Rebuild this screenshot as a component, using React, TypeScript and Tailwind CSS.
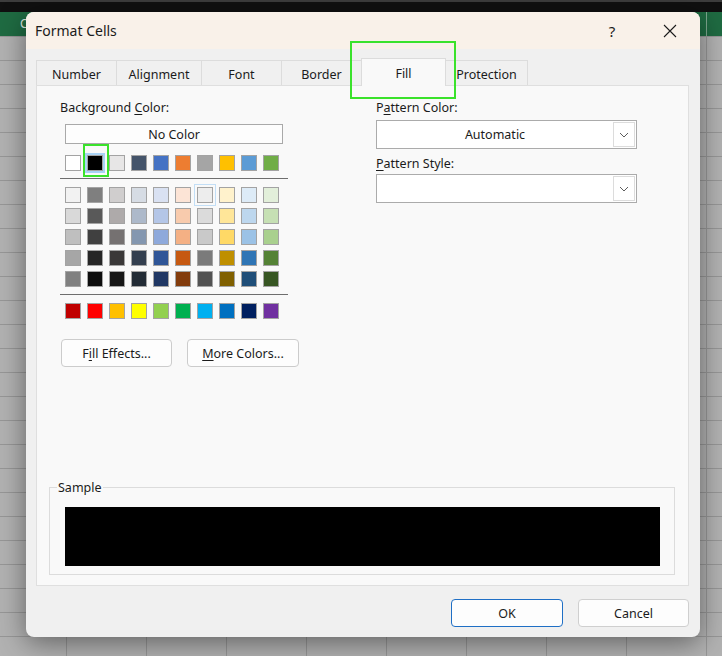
import React from "react";

const themeRow = [
  "bg-[#ffffff]", "bg-[#000000]", "bg-[#e7e6e6]", "bg-[#44546a]", "bg-[#4472c4]",
  "bg-[#ed7d31]", "bg-[#a5a5a5]", "bg-[#ffc000]", "bg-[#5b9bd5]", "bg-[#70ad47]",
];

const tintRows = [
  ["bg-[#f2f2f2]", "bg-[#7f7f7f]", "bg-[#d0cece]", "bg-[#d6dce4]", "bg-[#d9e1f2]", "bg-[#fce4d6]", "bg-[#ededed]", "bg-[#fff2cc]", "bg-[#ddebf7]", "bg-[#e2efda]"],
  ["bg-[#d9d9d9]", "bg-[#595959]", "bg-[#aeaaaa]", "bg-[#adb9ca]", "bg-[#b4c6e7]", "bg-[#f8cbad]", "bg-[#dbdbdb]", "bg-[#ffe699]", "bg-[#bdd7ee]", "bg-[#c6e0b4]"],
  ["bg-[#bfbfbf]", "bg-[#404040]", "bg-[#757171]", "bg-[#8497b0]", "bg-[#8ea9db]", "bg-[#f4b084]", "bg-[#c9c9c9]", "bg-[#ffd966]", "bg-[#9bc2e6]", "bg-[#a9d08e]"],
  ["bg-[#a6a6a6]", "bg-[#262626]", "bg-[#3a3838]", "bg-[#333f4f]", "bg-[#2f5597]", "bg-[#c65911]", "bg-[#7b7b7b]", "bg-[#bf8f00]", "bg-[#2f75b5]", "bg-[#548235]"],
  ["bg-[#808080]", "bg-[#0d0d0d]", "bg-[#161616]", "bg-[#222b35]", "bg-[#203764]", "bg-[#833c0c]", "bg-[#525252]", "bg-[#806000]", "bg-[#1f4e78]", "bg-[#375623]"],
];

const standardRow = [
  "bg-[#c00000]", "bg-[#ff0000]", "bg-[#ffc000]", "bg-[#ffff00]", "bg-[#92d050]",
  "bg-[#00b050]", "bg-[#00b0f0]", "bg-[#0070c0]", "bg-[#002060]", "bg-[#7030a0]",
];

function Swatch({ cls, extra = "" }: { cls: string; extra?: string }) {
  return <div className={`w-4 h-4 border border-[#a3a3a3] ${cls} ${extra}`} />;
}

function Chevron() {
  return (
    <svg width="10" height="6" viewBox="0 0 10 6">
      <path d="M1 1 L5 5 L9 1" fill="none" stroke="#5c5c5c" strokeWidth="1" />
    </svg>
  );
}

function Dropdown({ value }: { value: string }) {
  return (
    <div className="w-[261px] h-[29px] border border-[#ababab] bg-white flex">
      <div className="flex-1 flex items-center justify-center pt-px text-[12.5px]">{value}</div>
      <div className="w-[22px] my-px mr-px border border-[#dcdcdc] flex items-center justify-center">
        <Chevron />
      </div>
    </div>
  );
}

const tabs = [
  { label: "Number", w: "w-[81px]" },
  { label: "Alignment", w: "w-[86px]" },
  { label: "Font", w: "w-[81px]" },
  { label: "Border", w: "w-[81px]" },
  { label: "Fill", w: "w-[85px]", active: true },
  { label: "Protection", w: "w-[83px]" },
];

export default function App() {
  return (
    <div className="relative w-[722px] h-[656px] overflow-hidden bg-[#acacac] font-['Noto_Sans',sans-serif] text-[#1b1b1b]">
      {/* Excel background */}
      <div className="h-[12px] bg-[#101010] border-t-2 border-[#3d3d3d]" />
      <div className="h-[24px] bg-[#1f6b42] flex items-center">
        <span className="ml-[20px] text-[12px] leading-[24px] text-[#dfe9e2]">C</span>
        <div className="flex-1" />
        <div className="w-px h-full bg-[#7fa890] mr-[15px]" />
      </div>
      <div className="h-[620px] bg-[#b2b2b2] bg-[linear-gradient(to_right,#979797_1px,transparent_1px),linear-gradient(to_bottom,#979797_1px,transparent_1px)] bg-size-[80px_24px] bg-position-[66px_0px]" />

      {/* Dialog */}
      <div className="absolute left-[26px] top-[12px] w-[674px] h-[625px] rounded-[8px] bg-[#f0f0f0] shadow-[0_6px_28px_rgba(0,0,0,0.45)] flex flex-col overflow-hidden">
        {/* Title bar */}
        <div className="h-[37px] shrink-0 bg-[#f9f1e9] flex items-center pl-[9px]">
          <span className="text-[14px] leading-[20px]">Format Cells</span>
          <span className="ml-auto w-[16px] text-center text-[15px] leading-[20px] mr-[43px]">?</span>
          <svg width="14" height="14" viewBox="0 0 14 14" className="mr-[23px]">
            <path d="M1 1 L13 13 M13 1 L1 13" stroke="#1b1b1b" strokeWidth="1.1" fill="none" />
          </svg>
        </div>

        {/* Tabs */}
        <div className="flex items-end mt-[9px] ml-[10px] relative z-10">
          {tabs.map((t, i) => (
            <div
              key={t.label}
              className={`${t.w} ${i > 0 ? "-ml-px" : ""} border border-b-0 border-[#dcdcdc] flex items-center justify-center text-[12.5px] ${
                t.active ? "h-[28px] -mb-px pt-[3px] bg-[#f9f9f9] relative z-10" : "h-[25px] pt-[4px] bg-[#f0f0f0]"
              }`}
            >
              {t.label}
            </div>
          ))}
        </div>

        {/* Panel */}
        <div className="mx-[10px] w-[653px] h-[501px] shrink-0 border border-[#dfdfdf] bg-[#f9f9f9] flex flex-col">
          <div className="flex pl-[23px] pt-[13px]">
            {/* Left column */}
            <div className="w-[240px] flex flex-col">
              <div className="text-[12.5px] leading-[16px] pt-px h-[16px]">
                Background <span className="underline underline-offset-2">C</span>olor:
              </div>
              <div className="ml-[5px] mt-[9px] w-[218px] h-[20px] border border-[#a9a9a9] bg-[#fdfdfd] flex items-center justify-center pt-[3px] text-[12.5px]">
                No Color
              </div>
              <div className="ml-[5px] mt-[11px] flex gap-[6px]">
                {themeRow.map((c, i) => (
                  <Swatch key={i} cls={c} extra={i === 1 ? "outline-2 outline-[#a9d3f5]" : ""} />
                ))}
              </div>
              <div className="mt-[7px] h-px w-[228px] bg-[#6e6e6e]" />
              <div className="mt-[8px] ml-[5px] flex flex-col gap-[5px]">
                {tintRows.map((row, r) => (
                  <div key={r} className="flex gap-[6px]">
                    {row.map((c, i) => (
                      <Swatch
                        key={i}
                        cls={c}
                        extra={r === 0 && i === 6 ? "outline-1 outline-offset-2 outline-[#c2def6]" : ""}
                      />
                    ))}
                  </div>
                ))}
              </div>
              <div className="mt-[7px] h-px w-[228px] bg-[#6e6e6e]" />
              <div className="ml-[5px] mt-[8px] flex gap-[6px]">
                {standardRow.map((c, i) => (
                  <Swatch key={i} cls={c} />
                ))}
              </div>
              <div className="ml-px mt-[20px] flex gap-[15px]">
                <div className="w-[111px] h-[28px] rounded-[4px] border border-[#cccccc] bg-[#fdfdfd] flex items-center justify-center pt-[3px] text-[12.5px]">
                  <span>
                    F<span className="underline underline-offset-2">i</span>ll Effects...
                  </span>
                </div>
                <div className="w-[112px] h-[28px] rounded-[4px] border border-[#cccccc] bg-[#fdfdfd] flex items-center justify-center pt-[3px] text-[12.5px]">
                  <span>
                    <span className="underline underline-offset-2">M</span>ore Colors...
                  </span>
                </div>
              </div>
            </div>

            {/* Right column */}
            <div className="ml-[76px] flex flex-col">
              <div className="text-[12.5px] leading-[16px] pt-px h-[16px]">
                P<span className="underline underline-offset-2">a</span>ttern Color:
              </div>
              <div className="mt-[5px]">
                <Dropdown value="Automatic" />
              </div>
              <div className="mt-[6px] text-[12.5px] leading-[16px] pt-px h-[16px]">
                <span className="underline underline-offset-2">P</span>attern Style:
              </div>
              <div className="mt-[3px]">
                <Dropdown value="" />
              </div>
            </div>
          </div>

          {/* Sample */}
          <div className="mt-auto mb-[10px] ml-[12px] mr-[13px] relative border border-[#dcdcdc] pt-[19px] pb-[8px] pl-[15px] pr-[14px]">
            <span className="absolute left-[7px] -top-[8px] px-px bg-[#f9f9f9] text-[12.5px] leading-[16px]">Sample</span>
            <div className="h-[59px] bg-black" />
          </div>
        </div>

        {/* Footer */}
        <div className="mt-[13px] mr-[11px] flex justify-end gap-[15px]">
          <div className="w-[112px] h-[28px] rounded-[4px] border border-[#1f6fc5] bg-[#fdfdfd] flex items-center justify-center pt-[3px] text-[12.5px]">
            OK
          </div>
          <div className="w-[111px] h-[28px] rounded-[4px] border border-[#cfcfcf] bg-[#fdfdfd] flex items-center justify-center pt-[3px] text-[12.5px]">
            Cancel
          </div>
        </div>
      </div>

      {/* Green annotation boxes */}
      <div className="absolute left-[350px] top-[41px] w-[106px] h-[58px] border-2 border-[#3ae22b] pointer-events-none z-20" />
      <div className="absolute left-[83px] top-[144px] w-[26px] h-[33px] border-2 border-[#3ae22b] pointer-events-none z-20" />
    </div>
  );
}
